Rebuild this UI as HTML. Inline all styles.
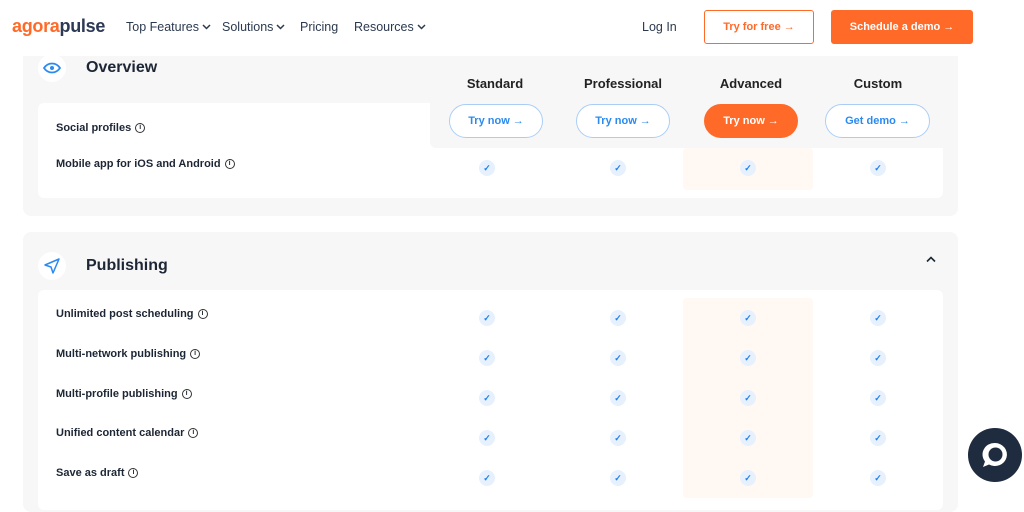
<!DOCTYPE html>
<html><head><meta charset="utf-8"><style>
*{margin:0;padding:0;box-sizing:border-box}
body{width:1024px;height:495px;overflow:hidden;background:#fff;font-family:"Liberation Sans",sans-serif;color:#1d2634;position:relative}
.abs{position:absolute}
.nav a{position:absolute;top:20px;font-size:12.5px;color:#2c3a4f}
.nav svg{vertical-align:1px;margin-left:3px}
.sec{position:absolute;left:23px;width:935px;background:#f7f7f7;border-radius:8px}
.card{position:absolute;background:#fff;border-radius:6px}
.lbl{position:absolute;left:56px;font-size:11px;font-weight:bold;color:#1d2634}
.i{display:inline-block;width:10px;height:10px;border:1px solid #333;border-radius:50%;font-size:7px;text-align:center;line-height:8px;margin-left:4px;vertical-align:2px;font-weight:bold}
.ck{position:absolute;width:16px;height:16px;border-radius:50%;background:#e6f1fd;color:#1a7ff0;font-size:9px;text-align:center;line-height:16px;font-weight:bold}
.hl{position:absolute;left:683px;width:130px;background:#fff8f3;border-radius:4px}
.plan{position:absolute;top:76px;width:130px;text-align:center;font-size:13px;font-weight:bold;color:#222}
.btn{position:absolute;top:104px;height:34px;border-radius:17px;border:1px solid #a9cdf7;background:#fff;color:#2b8af0;font-size:11px;font-weight:bold;text-align:center;line-height:32px}
</style></head><body>
<div class="nav">
<div class="abs" style="left:12px;top:16px;font-size:18px;font-weight:bold;letter-spacing:-0.3px"><span style="color:#ff6a28">agora</span><span style="color:#2d3a55">pulse</span></div>
<a style="left:126px">Top Features<svg width="9" height="6"><path d="M1 1l3.5 3.5L8 1" stroke="#2c3a4f" stroke-width="1.5" fill="none"/></svg></a>
<a style="left:222px">Solutions<svg width="9" height="6"><path d="M1 1l3.5 3.5L8 1" stroke="#2c3a4f" stroke-width="1.5" fill="none"/></svg></a>
<a style="left:300px">Pricing</a>
<a style="left:354px">Resources<svg width="9" height="6"><path d="M1 1l3.5 3.5L8 1" stroke="#2c3a4f" stroke-width="1.5" fill="none"/></svg></a>
<a style="left:642px">Log In</a>
</div>
<div class="abs" style="left:704px;top:10px;width:110px;height:34px;border:1px solid #ff6a28;border-radius:3px;color:#ff6a28;font-size:11px;font-weight:bold;text-align:center;line-height:32px">Try for free →</div>
<div class="abs" style="left:831px;top:10px;width:142px;height:34px;background:#ff6a28;border-radius:3px;color:#fff;font-size:11px;font-weight:bold;text-align:center;line-height:34px">Schedule a demo →</div>

<div class="sec" style="top:56px;height:160px;border-radius:0 0 8px 8px"></div>
<div class="abs" style="left:38px;top:54px;width:28px;height:28px;border-radius:50%;background:#fff"><svg width="28" height="28"><path d="M6 14c4-6 12-6 16 0c-4 6-12 6-16 0z" stroke="#2b8af0" stroke-width="1.8" fill="none"/><circle cx="14" cy="14" r="2" fill="#2b8af0"/></svg></div>
<div class="abs" style="left:86px;top:59px;font-size:16px;font-weight:bold">Overview</div>
<div class="card" style="left:38px;top:103px;width:905px;height:95px"></div>
<div class="abs" style="left:430px;top:100px;width:513px;height:48px;background:#f7f7f7;border-radius:0 0 0 6px"></div>
<div class="hl" style="top:148px;height:42px"></div>
<div class="plan" style="left:430px">Standard</div><div class="plan" style="left:558px">Professional</div><div class="plan" style="left:686px">Advanced</div><div class="plan" style="left:813px">Custom</div>
<div class="btn" style="left:449px;width:94px">Try now →</div>
<div class="btn" style="left:576px;width:94px">Try now →</div>
<div class="btn" style="left:704px;width:94px;background:#ff6a28;border-color:#ff6a28;color:#fff">Try now →</div>
<div class="btn" style="left:825px;width:105px">Get demo →</div>
<div class="lbl" style="top:122px">Social profiles<span class="i">i</span></div>
<div class="lbl" style="top:158px">Mobile app for iOS and Android<span class="i">i</span></div>
<div class="ck" style="left:479px;top:160px">✓</div><div class="ck" style="left:610px;top:160px">✓</div><div class="ck" style="left:740px;top:160px">✓</div><div class="ck" style="left:870px;top:160px">✓</div>

<div class="sec" style="top:232px;height:280px"></div>
<div class="abs" style="left:38px;top:252px;width:28px;height:28px;border-radius:50%;background:#fff"><svg width="28" height="28"><path d="M7 13l14-6-6 14-2-6z" stroke="#2b8af0" stroke-width="1.5" fill="none" stroke-linejoin="round"/></svg></div>
<div class="abs" style="left:86px;top:257px;font-size:16px;font-weight:bold">Publishing</div>
<svg class="abs" style="left:926px;top:256px" width="10" height="7"><path d="M1 5.5l4-4 4 4" stroke="#1d2634" stroke-width="1.6" fill="none"/></svg>
<div class="card" style="left:38px;top:290px;width:905px;height:220px"></div>
<div class="hl" style="top:298px;height:200px"></div>
<div class="lbl" style="top:308px">Unlimited post scheduling<span class="i">i</span></div>
<div class="lbl" style="top:348px">Multi-network publishing<span class="i">i</span></div>
<div class="lbl" style="top:388px">Multi-profile publishing<span class="i">i</span></div>
<div class="lbl" style="top:427px">Unified content calendar<span class="i">i</span></div>
<div class="lbl" style="top:467px">Save as draft<span class="i">i</span></div>
<div id="cks"></div>
<script>
var h='';[310,350,390,430,470].forEach(function(y){[479,610,740,870].forEach(function(x){h+='<div class="ck" style="left:'+x+'px;top:'+y+'px">✓</div>'})});document.getElementById('cks').innerHTML=h;
</script>
<div class="abs" style="left:968px;top:428px;width:54px;height:54px;border-radius:50%;background:#1f2b3e"><svg width="54" height="54"><path d="M27 15a12 11.5 0 1 1-6 21.5l-6 2.5 2-5.5A12 11.5 0 0 1 27 15z" fill="#fff"/><circle cx="27.5" cy="26.5" r="7" fill="#1f2b3e"/></svg></div>
</body></html>
